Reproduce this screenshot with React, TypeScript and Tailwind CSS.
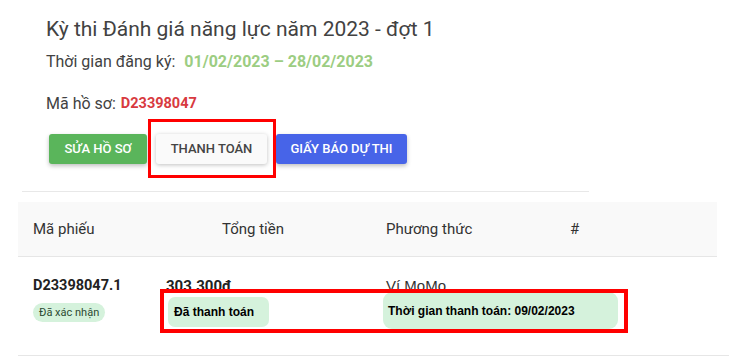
export default function App() {
  return (
    <div className="relative w-[729px] h-[361px] overflow-hidden bg-white font-['Roboto',sans-serif] text-[#424242]">
      <div className="ml-[22px] w-[567px] h-[192px] border-b border-[#e8e8e8] px-[24px] pt-[15px]">
        <h1 className="text-[21px] leading-[28px]">Kỳ thi Đánh giá năng lực năm 2023 - đợt 1</h1>
        <div className="mt-[8px] flex items-center gap-[9px] text-[16px] leading-[22px]">
          <span>Thời gian đăng ký:</span>
          <span className="font-bold text-[#9ccd82]">01/02/2023 – 28/02/2023</span>
        </div>
        <div className="mt-[20px] flex items-center gap-[5px] text-[16px] leading-[22px]">
          <span>Mã hồ sơ:</span>
          <span className="text-[14.5px] font-bold text-[#d83a40]">D23398047</span>
        </div>
        <div className="mt-[19px] flex gap-[9px] pl-[3px]">
          <button className="h-[30px] w-[98px] rounded-[3px] bg-[#5ab55b] text-[13px] font-medium text-white shadow-[0_2px_4px_rgba(0,0,0,0.25)]">
            SỬA HỒ SƠ
          </button>
          <button className="h-[30px] w-[111px] rounded-[3px] bg-[#fafafa] text-[13px] font-medium text-[#444] shadow-[0_1px_4px_rgba(0,0,0,0.25)]">
            THANH TOÁN
          </button>
          <button className="h-[30px] w-[131px] rounded-[3px] bg-[#4764e8] text-[13px] font-medium text-white shadow-[0_2px_4px_rgba(0,0,0,0.25)]">
            GIẤY BÁO DỰ THI
          </button>
        </div>
      </div>

      <div className="ml-[18px] mt-[10px]">
        <div className="grid h-[55px] w-[699px] grid-cols-[148px_220px_184px_1fr] items-center border-b border-[#e6e6e6] bg-[#f9f9f9] text-[15px] text-[#333]">
          <div className="pl-[15px]">Mã phiếu</div>
          <div className="pl-[56px]">Tổng tiền</div>
          <div>Phương thức</div>
          <div>#</div>
        </div>
        <div className="grid h-[99px] grid-cols-[148px_220px_184px_1fr] border-b border-[#e6e6e6] pt-[19px] text-[#222]">
          <div className="pl-[15px]">
            <div className="text-[14.5px] font-bold leading-[20px]">D23398047.1</div>
            <span className="mt-[7px] inline-block rounded-full bg-[#d5f2dc] px-[6px] text-[11px] leading-[19px] text-[#2c4a32]">
              Đã xác nhận
            </span>
          </div>
          <div>
            <div className="text-[15px] font-bold leading-[20px]">303.300đ</div>
            <div className="mt-[1px] ml-[2px] flex h-[30px] w-[101px] items-center rounded-[7px] bg-[#d5f2dc] pl-[6px] font-['Liberation_Sans',sans-serif] text-[12px] font-bold text-black">
              Đã thanh toán
            </div>
          </div>
          <div className="col-span-2">
            <div className="font-['Liberation_Sans',sans-serif] text-[15px] leading-[20px] text-[#333]">Ví MoMo</div>
            <div className="mt-[-4px] ml-[-3px] flex h-[37px] w-[235px] items-center rounded-[9px] bg-[#d5f2dc] pl-[5px] font-['Liberation_Sans',sans-serif] text-[12px] font-bold text-black">
              Thời gian thanh toán: 09/02/2023
            </div>
          </div>
        </div>
      </div>

      <div className="pointer-events-none absolute left-[148px] top-[119px] h-[59px] w-[128px] border-[3px] border-[#ff0000]" />
      <div className="pointer-events-none absolute left-[160px] top-[289px] h-[44px] w-[468px] border-[4px] border-[#ff0000]" />
    </div>
  );
}
